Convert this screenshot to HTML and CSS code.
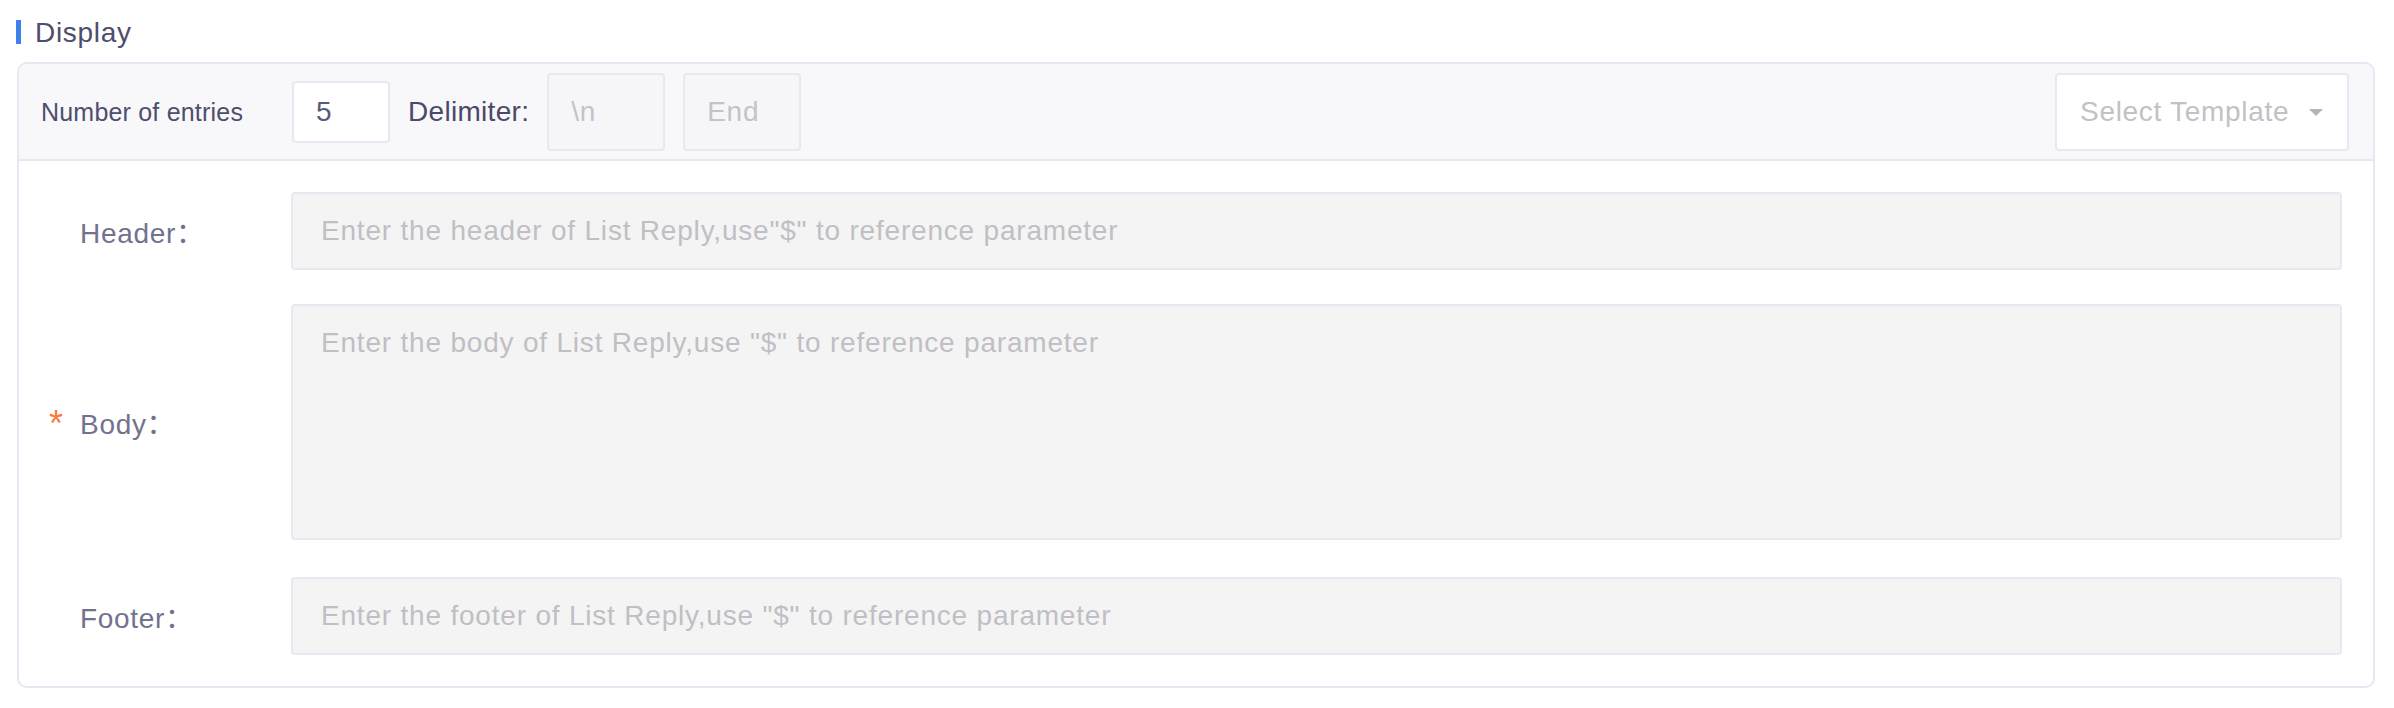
FILE: index.html
```html
<!DOCTYPE html>
<html lang="en">
<head>
<meta charset="utf-8">
<title>Display</title>
<link rel="stylesheet" href="styles.css">
</head>
<body>
<div class="page">
  <div class="section-title">
    <span class="title-bar"></span>
    <span class="title-text">Display</span>
  </div>
  <div class="card">
    <div class="toolbar">
      <span class="entries-label">Number of entries</span>
      <input class="num-input" type="text" value="5">
      <span class="delim-label">Delimiter:</span>
      <input class="delim-input" type="text" placeholder="\n" disabled>
      <input class="delim-input" type="text" placeholder="End" disabled>
      <div class="select">
        <span class="select-text">Select Template</span>
        <svg class="select-arrow" width="14" height="7" viewBox="0 0 14 7"><path d="M0 0 H14 L7 7 Z" fill="#b4b4b8"/></svg>
      </div>
    </div>
    <div class="form">
      <div class="row">
        <div class="label"><span class="label-text">Header：</span></div>
        <input class="field" type="text" placeholder="Enter the header of List Reply,use&quot;$&quot; to reference parameter" disabled>
      </div>
      <div class="row">
        <div class="label"><span class="req">*</span><span class="label-text">Body：</span></div>
        <textarea class="field area" placeholder="Enter the body of List Reply,use &quot;$&quot; to reference parameter" disabled></textarea>
      </div>
      <div class="row">
        <div class="label"><span class="label-text">Footer：</span></div>
        <input class="field" type="text" placeholder="Enter the footer of List Reply,use &quot;$&quot; to reference parameter" disabled>
      </div>
    </div>
  </div>
</div>
</body>
</html>
```

FILE: styles.css
```css
* { box-sizing: border-box; }

html, body {
  margin: 0;
  padding: 0;
  background: #ffffff;
}

body {
  font-family: "Liberation Sans", "Noto Sans CJK SC", Arial, sans-serif;
  color: #4e4e6c;
  letter-spacing: 0.7px;
}

.page {
  padding: 20px 19px 0 17px;
}

.section-title {
  display: flex;
  align-items: flex-start;
  height: 26px;
  margin-left: -1px;
}

.title-bar {
  width: 5px;
  height: 24px;
  background: #3f7fee;
  flex: none;
}

.title-text {
  margin-left: 14px;
  font-size: 28px;
  line-height: 26px;
  color: #4e4e6c;
}

.card {
  margin-top: 16px;
  border: 2px solid #e7e7f3;
  border-radius: 10px;
  overflow: hidden;
}

.toolbar {
  display: flex;
  align-items: center;
  gap: 18px;
  padding: 9px 24px 8px 22px;
  background: #f8f8fa;
  border-bottom: 2px solid #e7e7f3;
}

.entries-label {
  flex: none;
  width: 233px;
  font-size: 25px;
  letter-spacing: 0.2px;
  color: #4e4e6c;
}

input, textarea {
  font-family: inherit;
  letter-spacing: inherit;
  margin: 0;
  outline: none;
}

.num-input {
  flex: none;
  width: 98px;
  height: 62px;
  padding: 0 22px;
  border: 2px solid #e8e8f3;
  border-radius: 4px;
  background: #ffffff;
  font-size: 28px;
  color: #5b5b78;
}

.delim-label {
  flex: none;
  font-size: 28px;
  letter-spacing: 0.3px;
  color: #4a4a68;
}

.delim-input {
  flex: none;
  width: 118px;
  height: 78px;
  padding: 0 22px;
  border: 2px solid #e8e8f3;
  border-radius: 4px;
  background: #f6f6f9;
  font-size: 28px;
}

.delim-input::placeholder {
  color: #c3c3c9;
}

.select {
  margin-left: auto;
  flex: none;
  width: 294px;
  height: 78px;
  display: flex;
  align-items: center;
  padding: 0 24px 0 23px;
  border: 2px solid #e8e8f3;
  border-radius: 4px;
  background: #ffffff;
}

.select-text {
  font-size: 28px;
  color: #c1c1c6;
  white-space: nowrap;
}

.select-arrow {
  margin-left: auto;
  display: block;
}

.form {
  display: flex;
  flex-direction: column;
  padding: 31px 31px 31px 0;
}

.row {
  display: flex;
  align-items: center;
}

.row + .row {
  margin-top: 34px;
}

.row:last-child {
  margin-top: 37px;
}

.label {
  flex: none;
  width: 272px;
  padding-left: 61px;
  display: flex;
  align-items: center;
  font-size: 28px;
  color: #72728e;
}

.req {
  width: 31px;
  margin-left: -31px;
  color: #f77b42;
  font-size: 36px;
  line-height: 28px;
  align-self: flex-start;
  padding-top: 8px;
}

.label-text {
  white-space: nowrap;
}

.field {
  flex: 1;
  min-width: 0;
  height: 78px;
  padding: 0 28px;
  border: 2px solid #e8e8f3;
  border-radius: 4px;
  background: #f4f4f4;
  font-size: 28px;
  letter-spacing: 0.8px;
  color: #5b5b78;
}

.field::placeholder {
  color: #bfbfc4;
}

.area {
  height: 236px;
  padding: 17px 28px;
  line-height: 40px;
  resize: none;
  display: block;
}
```
